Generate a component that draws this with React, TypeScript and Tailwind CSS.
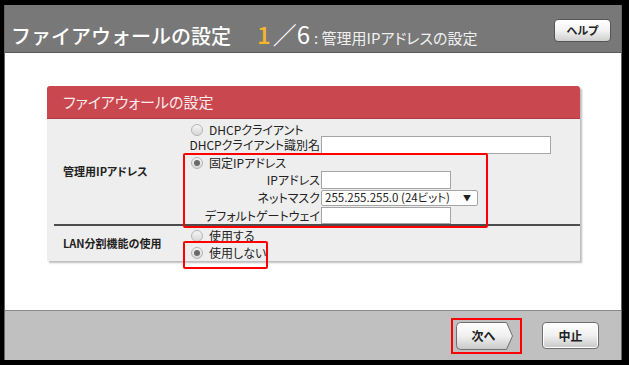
import React from "react";

const font = "[font-family:'Noto_Sans_CJK_JP','Noto_Sans',sans-serif]";

function Radio({ checked }: { checked?: boolean }) {
  return (
    <span className="relative inline-flex h-[12px] w-[12px] shrink-0 items-center justify-center rounded-full border border-[#b5b5b5] bg-gradient-to-b from-[#f4f4f4] to-[#d8d8d8]">
      {checked && <span className="h-[6px] w-[6px] rounded-full bg-[#6a6a6a]" />}
    </span>
  );
}

function Btn({ children, w }: { children: React.ReactNode; w: string }) {
  return (
    <div
      className={`${w} flex h-[27px] items-center justify-center rounded-[4px] border border-[#6f6f6f] bg-gradient-to-b from-[#ffffff] via-[#f0f0f0] to-[#c8c8c8] text-[12px] font-bold leading-none text-[#222] shadow-[inset_0_0_0_1px_#fff]`}
    >
      {children}
    </div>
  );
}

export default function App() {
  return (
    <div
      className={`${font} h-[365px] w-[629px] overflow-hidden bg-black pb-[5px] pl-[4px] pr-[7px] pt-[5px] [font-feature-settings:'palt']`}
    >
      <div className="flex h-full w-full flex-col border-l border-r border-[#666] bg-white">
        {/* header */}
        <div className="flex h-[48px] shrink-0 items-center border-b border-[#5a5a5a] bg-[#787878] pl-[6px] pr-[10px]">
          <div className="flex items-baseline pt-[10px]">
            <span className="text-[20px] font-medium text-white [font-feature-settings:normal]">ファイアウォールの設定</span>
            <span className="ml-[26px] text-[24px] font-medium text-[#f7b52c]">1</span>
            <span className="ml-[2px] text-[24px] text-white">／6</span>
            <span className="ml-[4px] text-[15px] text-[#f0f0f0]">: 管理用IPアドレスの設定</span>
          </div>
          <div className="ml-auto pt-[3px]">
            <div className="flex h-[23px] w-[57px] items-center justify-center rounded-[4px] border border-[#555] bg-gradient-to-b from-white via-[#f2f2f2] to-[#cfcfcf] text-[11px] font-bold leading-none text-[#222]">
              ヘルプ
            </div>
          </div>
        </div>

        {/* body */}
        <div className="flex-1 pl-[42px] pt-[33px]">
          <div className="relative w-[533px] rounded-t-[3px] bg-[#eeeeee] shadow-[2px_2px_2px_#bdbdbd]">
            <div className="flex h-[33px] items-center rounded-t-[3px] border-b border-[#b03a43] bg-[#c9474f] pl-[16px] text-[15px] text-[#fbeaea]">
              ファイアウォールの設定
            </div>
            {/* row 1 */}
            <div className="ml-[7px] flex h-[107px] border-b-2 border-[#4d4d4d] text-[12px] leading-none text-[#222]">
              <div className="flex w-[129px] items-center pl-[9px] text-[11px] font-bold text-[#222]">
                管理用IPアドレス
              </div>
              <div className="flex flex-col">
                <div className="mt-[4px] flex h-[13px] items-center gap-[6px] pl-[8px]">
                  <Radio />
                  <span>DHCPクライアント</span>
                </div>
                <div className="flex h-[18px] items-center">
                  <span className="w-[137px] text-right">DHCPクライアント識別名</span>
                  <span className="ml-[1px] h-[18px] w-[230px] border border-[#a5a5a5] bg-white" />
                </div>
                <div className="mt-[2px] flex h-[14px] items-center gap-[6px] pl-[8px]">
                  <Radio checked />
                  <span>固定IPアドレス</span>
                </div>
                <div className="mt-[1px] flex h-[18px] items-center">
                  <span className="w-[137px] text-right">IPアドレス</span>
                  <span className="ml-[1px] h-[18px] w-[130px] border border-[#a5a5a5] bg-white" />
                </div>
                <div className="mt-[1px] flex h-[16px] items-center">
                  <span className="w-[137px] text-right">ネットマスク</span>
                  <span className="ml-[1px] flex h-[16px] w-[157px] items-center justify-between rounded-[2px] border border-[#a5a5a5] bg-white pl-[3px] pr-[6px] text-[11.5px]">
                    <span>255.255.255.0 (24ビット)</span>
                    <span className="text-[8px]">▼</span>
                  </span>
                </div>
                <div className="mt-[1px] flex h-[17px] items-center">
                  <span className="w-[137px] text-right">デフォルトゲートウェイ</span>
                  <span className="ml-[1px] h-[17px] w-[130px] border border-[#a5a5a5] bg-white" />
                </div>
              </div>
            </div>
            {/* row 2 */}
            <div className="ml-[7px] flex h-[35px] text-[12px] leading-none text-[#222]">
              <div className="flex w-[129px] items-center pl-[9px] text-[11px] font-bold text-[#222]">
                LAN分割機能の使用
              </div>
              <div className="flex flex-col">
                <div className="mt-[3px] flex h-[14px] items-center gap-[6px] pl-[8px]">
                  <Radio />
                  <span>使用する</span>
                </div>
                <div className="mt-[3px] flex h-[14px] items-center gap-[6px] pl-[8px]">
                  <Radio checked />
                  <span>使用しない</span>
                </div>
              </div>
            </div>

            {/* annotation boxes */}
            <div className="pointer-events-none absolute left-[136px] top-[67px] h-[75px] w-[305px] rounded-[2px] border-2 border-[#ff0000]" />
            <div className="pointer-events-none absolute left-[136px] top-[155px] h-[28px] w-[85px] rounded-[2px] border-2 border-[#ff0000]" />
          </div>
        </div>

        {/* footer */}
        <div className="flex h-[50px] shrink-0 items-center border-t border-[#8a8a8a] bg-[#c0c0c0] pl-[446px]">
          <div className="flex h-[36px] w-[71px] items-center justify-center border-2 border-[#ff0000]">
            <div className="relative flex h-[28px] w-[62px] items-center">
              <svg width="62" height="28" viewBox="0 0 62 28" className="absolute inset-0">
                <defs>
                  <linearGradient id="g" x1="0" y1="0" x2="0" y2="1">
                    <stop offset="0" stopColor="#ffffff" />
                    <stop offset="0.5" stopColor="#f0f0f0" />
                    <stop offset="1" stopColor="#c8c8c8" />
                  </linearGradient>
                </defs>
                <path
                  d="M4.5 0.5 H50.5 L56.5 14 L50.5 27.5 H4.5 Q0.5 27.5 0.5 23.5 V4.5 Q0.5 0.5 4.5 0.5 Z"
                  fill="url(#g)"
                  stroke="#6f6f6f"
                />
              </svg>
              <span className="relative ml-[16px] text-[12px] font-bold leading-none text-[#222]">次へ</span>
            </div>
          </div>
          <div className="ml-[20px]">
            <Btn w="w-[57px]">中止</Btn>
          </div>
        </div>
      </div>
    </div>
  );
}
